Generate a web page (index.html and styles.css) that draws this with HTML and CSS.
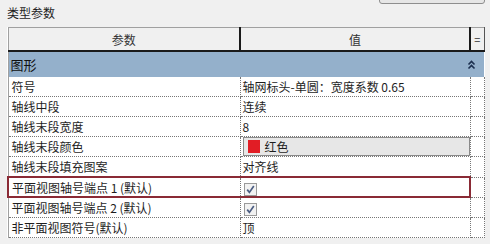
FILE: index.html
```html
<!DOCTYPE html>
<html lang="zh-CN">
<head>
    <meta charset="UTF-8">
    <meta name="viewport" content="width=device-width, initial-scale=1.0">
    <title>类型参数</title>
    <link rel="stylesheet" href="styles.css">
</head>
<body>
    <div class="topbar"><span class="btn"></span></div>
    <div class="title">类型参数</div>
    <table class="props">
        <colgroup>
            <col class="col-name">
            <col class="col-val">
            <col class="col-eq">
        </colgroup>
        <thead>
            <tr>
                <th>参数</th>
                <th class="th-val">值</th>
                <th class="th-eq">=</th>
            </tr>
        </thead>
        <tbody>
            <tr class="group">
                <td colspan="3">
                    <div class="group-in">
                        <span>图形</span>
                        <svg class="chev" width="9" height="10" viewBox="0 0 9 10">
                            <path d="M1.5 4.5 L4.5 1.5 L7.5 4.5 M1.5 8.5 L4.5 5.5 L7.5 8.5" fill="none" stroke="#1c2f4f" stroke-width="1.6"/>
                        </svg>
                    </div>
                </td>
            </tr>
            <tr><td>符号</td><td>轴网标头-单圆：宽度系数 0.65</td><td></td></tr>
            <tr><td>轴线中段</td><td>连续</td><td></td></tr>
            <tr><td>轴线末段宽度</td><td>8</td><td></td></tr>
            <tr>
                <td>轴线末段颜色</td>
                <td class="color-cell"><div class="color-btn"><span class="swatch"></span>红色</div></td>
                <td></td>
            </tr>
            <tr><td>轴线末段填充图案</td><td>对齐线</td><td></td></tr>
            <tr class="selected">
                <td>平面视图轴号端点 1 (默认)</td>
                <td><span class="check"><svg width="9" height="9" viewBox="0 0 9 9"><path d="M1.2 4.6 L3.4 7.4 L7.8 1" fill="none" stroke="#4b5d82" stroke-width="1.7"/></svg></span></td>
                <td></td>
            </tr>
            <tr>
                <td>平面视图轴号端点 2 (默认)</td>
                <td><span class="check"><svg width="9" height="9" viewBox="0 0 9 9"><path d="M1.2 4.6 L3.4 7.4 L7.8 1" fill="none" stroke="#4b5d82" stroke-width="1.7"/></svg></span></td>
                <td></td>
            </tr>
            <tr><td>非平面视图符号(默认)</td><td>顶</td><td></td></tr>
        </tbody>
    </table>
</body>
</html>
```

FILE: styles.css
```css
body {
    margin: 0;
    background-color: #f0f0f0;
    font-family: "Noto Sans CJK SC", "Liberation Sans", sans-serif;
    font-size: 12px;
    color: #1e1e1e;
    overflow: hidden;
}
.topbar {
    height: 3px;
    display: flex;
    justify-content: flex-end;
    padding-right: 5px;
}
.btn {
    width: 104px;
    height: 20px;
    margin-top: -18px;
    border: 1px solid #8e8e8e;
    border-radius: 3px;
    background: #e6e6e6;
}
.title {
    padding-left: 7px;
    height: 24px;
    line-height: 19px;
    font-size: 12px;
}
.props {
    margin-left: 7px;
    width: 477px;
    border-collapse: collapse;
    table-layout: fixed;
    background: #fff;
    border-left: 1px solid #a0a0a0;
}
.col-name { width: 232px; }
.col-val { width: 230px; }
.col-eq { width: 14px; }
th {
    height: 22px;
    padding: 0;
    font-weight: normal;
    background: #f0f0f0;
    border-top: 1px solid #a0a0a0;
    border-bottom: 2px solid #1a1a1a;
    color: #333;
}
.th-val {
    border-left: 2px solid #1a1a1a;
}
.th-eq {
    border-left: 2px solid #1a1a1a;
    border-right: 1px solid #555;
    font-size: 11px;
}
td {
    height: 19px;
    padding: 0 0 0 3px;
    white-space: nowrap;
    overflow: hidden;
    border-bottom: 1px dotted #777;
    border-right: 1px dotted #777;
}
td:nth-child(2) {
    padding-left: 2px;
}
.group td {
    height: 25px;
    background: #94b0cb;
    border: none;
    padding: 0 8px 0 2px;
}
.group-in {
    display: flex;
    justify-content: space-between;
    align-items: center;
    font-size: 13px;
    color: #101010;
}
.color-cell {
    padding: 0;
}
.color-btn {
    display: flex;
    align-items: center;
    gap: 5px;
    height: 17px;
    padding-left: 4px;
    background: #e7e7e7;
    border: 1px solid #8a8a8a;
}
.swatch {
    width: 12px;
    height: 13px;
    background: #e11d25;
}
.check {
    display: inline-flex;
    align-items: center;
    justify-content: center;
    width: 11px;
    height: 11px;
    margin-left: 1px;
    border: 1px solid #9a9a9a;
    background: #f2f2f2;
    vertical-align: middle;
}
.selected td:nth-child(1),
.selected td:nth-child(2) {
    height: 18px;
    border-top: 2px solid #8a2a35;
    border-bottom: 2px solid #8a2a35;
}
.selected td:nth-child(1) {
    border-left: 2px solid #8a2a35;
    border-right: 1px dotted #777;
}
.selected td:nth-child(2) {
    border-right: 2px solid #8a2a35;
}
```
